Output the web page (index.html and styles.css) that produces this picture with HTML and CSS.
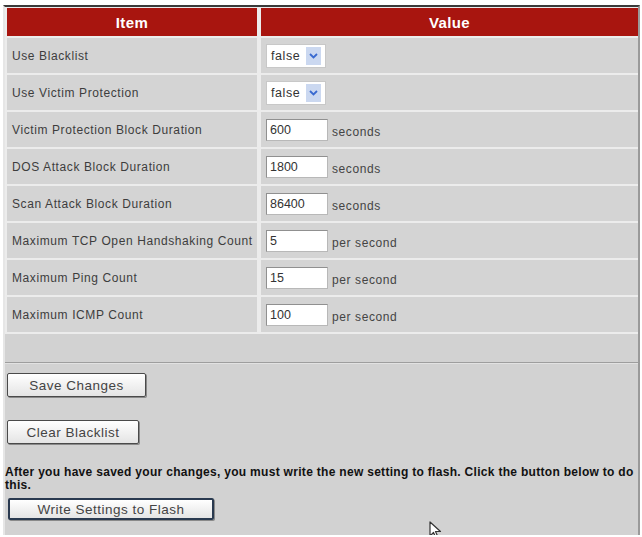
FILE: index.html
```html
<!DOCTYPE html>
<html>
<head>
<meta charset="utf-8">
<link rel="stylesheet" href="styles.css">
</head>
<body>
<div class="panel">
  <div class="table">
    <div class="th">Item</div>
    <div class="th">Value</div>

    <div class="td label">Use Blacklist</div>
    <div class="td value"><div class="select"><span class="sel-text">false</span><span class="sel-arrow"><svg width="9" height="6" viewBox="0 0 9 6"><path d="M1 1 L4.5 4.5 L8 1" fill="none" stroke="#3a6ad0" stroke-width="1.8"/></svg></span></div></div>

    <div class="td label">Use Victim Protection</div>
    <div class="td value"><div class="select"><span class="sel-text">false</span><span class="sel-arrow"><svg width="9" height="6" viewBox="0 0 9 6"><path d="M1 1 L4.5 4.5 L8 1" fill="none" stroke="#3a6ad0" stroke-width="1.8"/></svg></span></div></div>

    <div class="td label">Victim Protection Block Duration</div>
    <div class="td value"><input class="field" type="text" value="600"><span class="unit">seconds</span></div>

    <div class="td label">DOS Attack Block Duration</div>
    <div class="td value"><input class="field" type="text" value="1800"><span class="unit">seconds</span></div>

    <div class="td label">Scan Attack Block Duration</div>
    <div class="td value"><input class="field" type="text" value="86400"><span class="unit">seconds</span></div>

    <div class="td label">Maximum TCP Open Handshaking Count</div>
    <div class="td value"><input class="field" type="text" value="5"><span class="unit">per second</span></div>

    <div class="td label">Maximum Ping Count</div>
    <div class="td value"><input class="field" type="text" value="15"><span class="unit">per second</span></div>

    <div class="td label">Maximum ICMP Count</div>
    <div class="td value"><input class="field" type="text" value="100"><span class="unit">per second</span></div>
  </div>
  <div class="spacer"></div>
  <div class="rule"></div>
  <div class="actions">
    <button class="btn btn-save" type="button">Save Changes</button>
    <button class="btn btn-clear" type="button">Clear Blacklist</button>
  </div>
  <p class="note">After you have saved your changes, you must write the new setting to flash. Click the button below to do this.</p>
  <button class="btn btn-flash" type="button">Write Settings to Flash</button>
  <svg class="cursor" width="14" height="18" viewBox="0 0 14 18"><path d="M1 1 L1 15 L4.5 11.5 L7 17 L9 16 L6.5 10.5 L11.5 10.5 Z" fill="#fff" stroke="#333" stroke-width="1.2" stroke-linejoin="round"/></svg>
</div>
</body>
</html>
```
FILE: styles.css
```css
html, body {
  margin: 0;
  padding: 0;
  background: #ffffff;
}
body {
  font-family: "Liberation Sans", Arial, sans-serif;
  color: #333;
}
.panel {
  position: relative;
  margin: 5px 2px 0 3px;
  height: 530px;
  background: #d2d2d2;
  border-top: 2px solid #3a3a3a;
  border-left: 2px solid #e6e6e6;
  border-right: 2px solid #9a9a9a;
  box-sizing: border-box;
}
.table {
  display: grid;
  grid-template-columns: 250px 1fr;
  grid-auto-rows: 35px;
  grid-template-rows: 28px;
  gap: 2px 4px;
  background: #ececec;
  padding: 1px 0 2px 2px;
}
.th {
  background: #a8150f;
  color: #fff;
  font-weight: bold;
  font-size: 15px;
  letter-spacing: 0.4px;
  display: flex;
  align-items: center;
  justify-content: center;
}
.td {
  background: #d4d4d4;
  display: flex;
  align-items: center;
  font-size: 12px;
  letter-spacing: 0.6px;
}
.label {
  padding-left: 5px;
  color: #3d3d3d;
}
.value {
  padding-left: 5px;
}
.select {
  display: flex;
  align-items: center;
  justify-content: space-between;
  width: 60px;
  height: 24px;
  box-sizing: border-box;
  background: #fff;
  border: 1px solid #c8c8c8;
  padding: 0 4px 0 4px;
}
.sel-text {
  font-size: 12.5px;
  color: #333;
  letter-spacing: 0.6px;
}
.sel-arrow {
  display: flex;
  align-items: center;
  justify-content: center;
  width: 15px;
  height: 18px;
  background: #cbd8f0;
}
.field {
  width: 62px;
  height: 22px;
  box-sizing: border-box;
  margin: 0;
  padding: 0 3px;
  border: 1px solid #b8b8b8;
  border-top-color: #909090;
  border-left-color: #909090;
  background: #fff;
  font-family: "Liberation Sans", Arial, sans-serif;
  font-size: 12.5px;
  color: #333;
}
.unit {
  margin-left: 4px;
  margin-top: 5px;
  font-size: 12px;
  letter-spacing: 0.6px;
  color: #444;
}
.spacer {
  height: 28px;
}
.rule {
  border-top: 1px solid #9e9e9e;
  border-bottom: 1px solid #e2e2e2;
}
.actions {
  display: flex;
  flex-direction: column;
  align-items: flex-start;
  gap: 23px;
  padding: 9px 0 0 2px;
}
.btn {
  font-family: "Liberation Sans", Arial, sans-serif;
  font-size: 13.5px;
  letter-spacing: 0.5px;
  color: #444;
  background: linear-gradient(#ffffff, #e4e4e4);
  border: 1px solid #4a4a4a;
  border-radius: 2px;
  box-shadow: 1px 1px 0 #8a8a8a;
  padding: 0;
  margin: 0;
}
.btn-save {
  width: 139px;
  height: 24px;
}
.btn-clear {
  width: 132px;
  height: 24px;
}
.note {
  margin: 22px 0 0 0;
  font-size: 12px;
  font-weight: bold;
  line-height: 13px;
  color: #111;
  letter-spacing: 0.3px;
  width: 634px;
}
.btn-flash {
  display: block;
  margin: 6px 0 0 3px;
  width: 206px;
  height: 22px;
  border-color: #2a3a50;
  border-width: 2px;
}
.cursor {
  position: absolute;
  left: 424px;
  top: 514px;
}
```
